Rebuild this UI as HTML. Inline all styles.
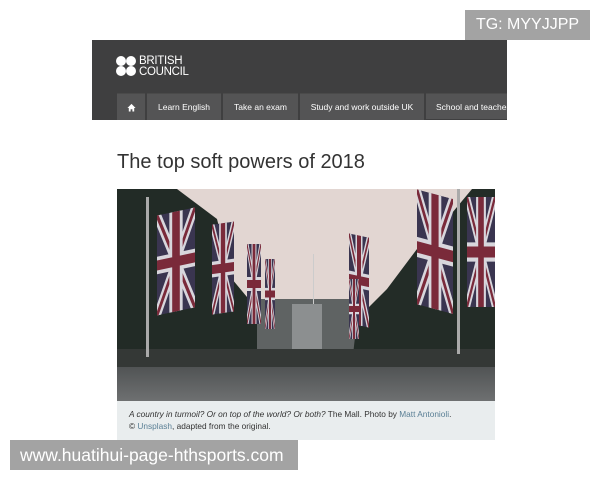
<!DOCTYPE html>
<html><head><style>
body{margin:0;width:600px;height:480px;background:#fff;position:relative;overflow:hidden;font-family:"Liberation Sans",Arial,sans-serif}
.hdr{position:absolute;left:92px;top:40px;width:415px;height:80px;background:#3f3f40}
.logo{position:absolute;left:24px;top:16px;}
.dot{position:absolute;width:10px;height:10px;border-radius:50%;background:#fff}
.lt{position:absolute;top:0;color:#fff;font-size:11.5px;line-height:10.5px;letter-spacing:-0.3px}
.nav{position:absolute;top:53px;height:26px;background:#545455;color:#fff;font-size:8.5px;line-height:26px;text-align:center;border-top:1px solid #4a4a4a}
h1{position:absolute;left:117px;top:151px;margin:0;font-weight:normal;font-size:20px;color:#333}
.cap{position:absolute;left:117px;top:401px;width:378px;height:39px;background:#e9edee;font-size:8.3px;color:#333;line-height:12px;padding:7px 0 0 12px;box-sizing:border-box}
.cap a{color:#5a7f95}
.wm{position:absolute;background:#a3a3a3;color:#fff}
</style></head><body>
<div class="hdr">
 <div class="logo">
  <div class="dot" style="left:0;top:0"></div><div class="dot" style="left:10px;top:0"></div>
  <div class="dot" style="left:0;top:10px"></div><div class="dot" style="left:10px;top:10px"></div>
  <div class="lt" style="left:23px">BRITISH<br>COUNCIL</div>
 </div>
 <div class="nav" style="left:25px;width:28px"><svg width="9" height="9" viewBox="0 0 10 10" style="vertical-align:middle"><path d="M5 1L0.5 5.5H2V9.5H4V7H6V9.5H8V5.5H9.5Z" fill="#fff"/></svg></div>
 <div class="nav" style="left:55px;width:74px">Learn English</div>
 <div class="nav" style="left:131px;width:75px">Take an exam</div>
 <div class="nav" style="left:208px;width:124px">Study and work outside UK</div>
 <div class="nav" style="left:334px;width:81px;text-align:left;padding-left:10px;box-sizing:border-box;white-space:nowrap;overflow:hidden">School and teachers</div>
</div>
<h1>The top soft powers of 2018</h1>
<svg style="position:absolute;left:117px;top:189px" width="378" height="212" viewBox="0 0 378 212">
 <defs>
  <linearGradient id="r" x1="0" y1="0" x2="0" y2="1"><stop offset="0" stop-color="#4e5152"/><stop offset="1" stop-color="#6e7071"/></linearGradient>
  <symbol id="uj" viewBox="0 0 20 40" preserveAspectRatio="none">
   <rect width="20" height="40" fill="#3a3550"/>
   <path d="M0 0L20 40M20 0L0 40" stroke="#d8d6dc" stroke-width="4"/>
   <path d="M0 0L20 40M20 0L0 40" stroke="#7a2a3a" stroke-width="1.5"/>
   <path d="M10 0V40M0 20H20" stroke="#d8d6dc" stroke-width="7"/>
   <path d="M10 0V40M0 20H20" stroke="#7a2a3a" stroke-width="4"/>
  </symbol>
 </defs>
 <rect width="378" height="212" fill="#e2d6d2"/>
 <rect x="130" y="110" width="120" height="65" fill="#5f6363"/>
 <rect x="175" y="115" width="30" height="60" fill="#8c8f90"/>
 <polygon points="0,0 60,0 100,30 115,90 140,120 140,175 0,180" fill="#222b26"/>
 <polygon points="378,0 355,0 330,30 300,60 270,100 240,130 235,175 378,175" fill="#232c27"/>
 <rect x="0" y="175" width="378" height="37" fill="url(#r)"/>
 <rect x="0" y="160" width="378" height="18" fill="#343836"/>
 <use href="#uj" x="40" y="15" width="38" height="100" transform="skewY(-12) translate(0,20)"/>
 <use href="#uj" x="95" y="35" width="22" height="90" transform="skewY(-8) translate(0,14)"/>
 <use href="#uj" x="350" y="8" width="28" height="110"/>
 <use href="#uj" x="300" y="0" width="36" height="115" transform="skewY(15) translate(0,-80)"/>
 <use href="#uj" x="232" y="45" width="20" height="90" transform="skewY(12) translate(0,-50)"/>
 <use href="#uj" x="130" y="55" width="14" height="80"/>
 <use href="#uj" x="148" y="70" width="10" height="70"/>
 <use href="#uj" x="232" y="90" width="10" height="60"/>
 <rect x="29" y="8" width="3" height="160" fill="#aaa"/>
 <rect x="340" y="0" width="3" height="165" fill="#aaa"/>
 <rect x="196" y="65" width="1" height="50" fill="#ccc"/>
</svg>
<div class="cap"><i>A country in turmoil? Or on top of the world? Or both?</i> The Mall. Photo by <a>Matt Antonioli</a>.<br>© <a>Unsplash</a>, adapted from the original.</div>
<div class="wm" style="left:465px;top:10px;width:125px;height:30px;font-size:16px;line-height:30px;text-align:center">TG: MYYJJPP</div>
<div class="wm" style="left:10px;top:440px;width:288px;height:30px;font-size:17.5px;line-height:30px;padding-left:10px;box-sizing:border-box">www.huatihui-page-hthsports.com</div>
</body></html>
